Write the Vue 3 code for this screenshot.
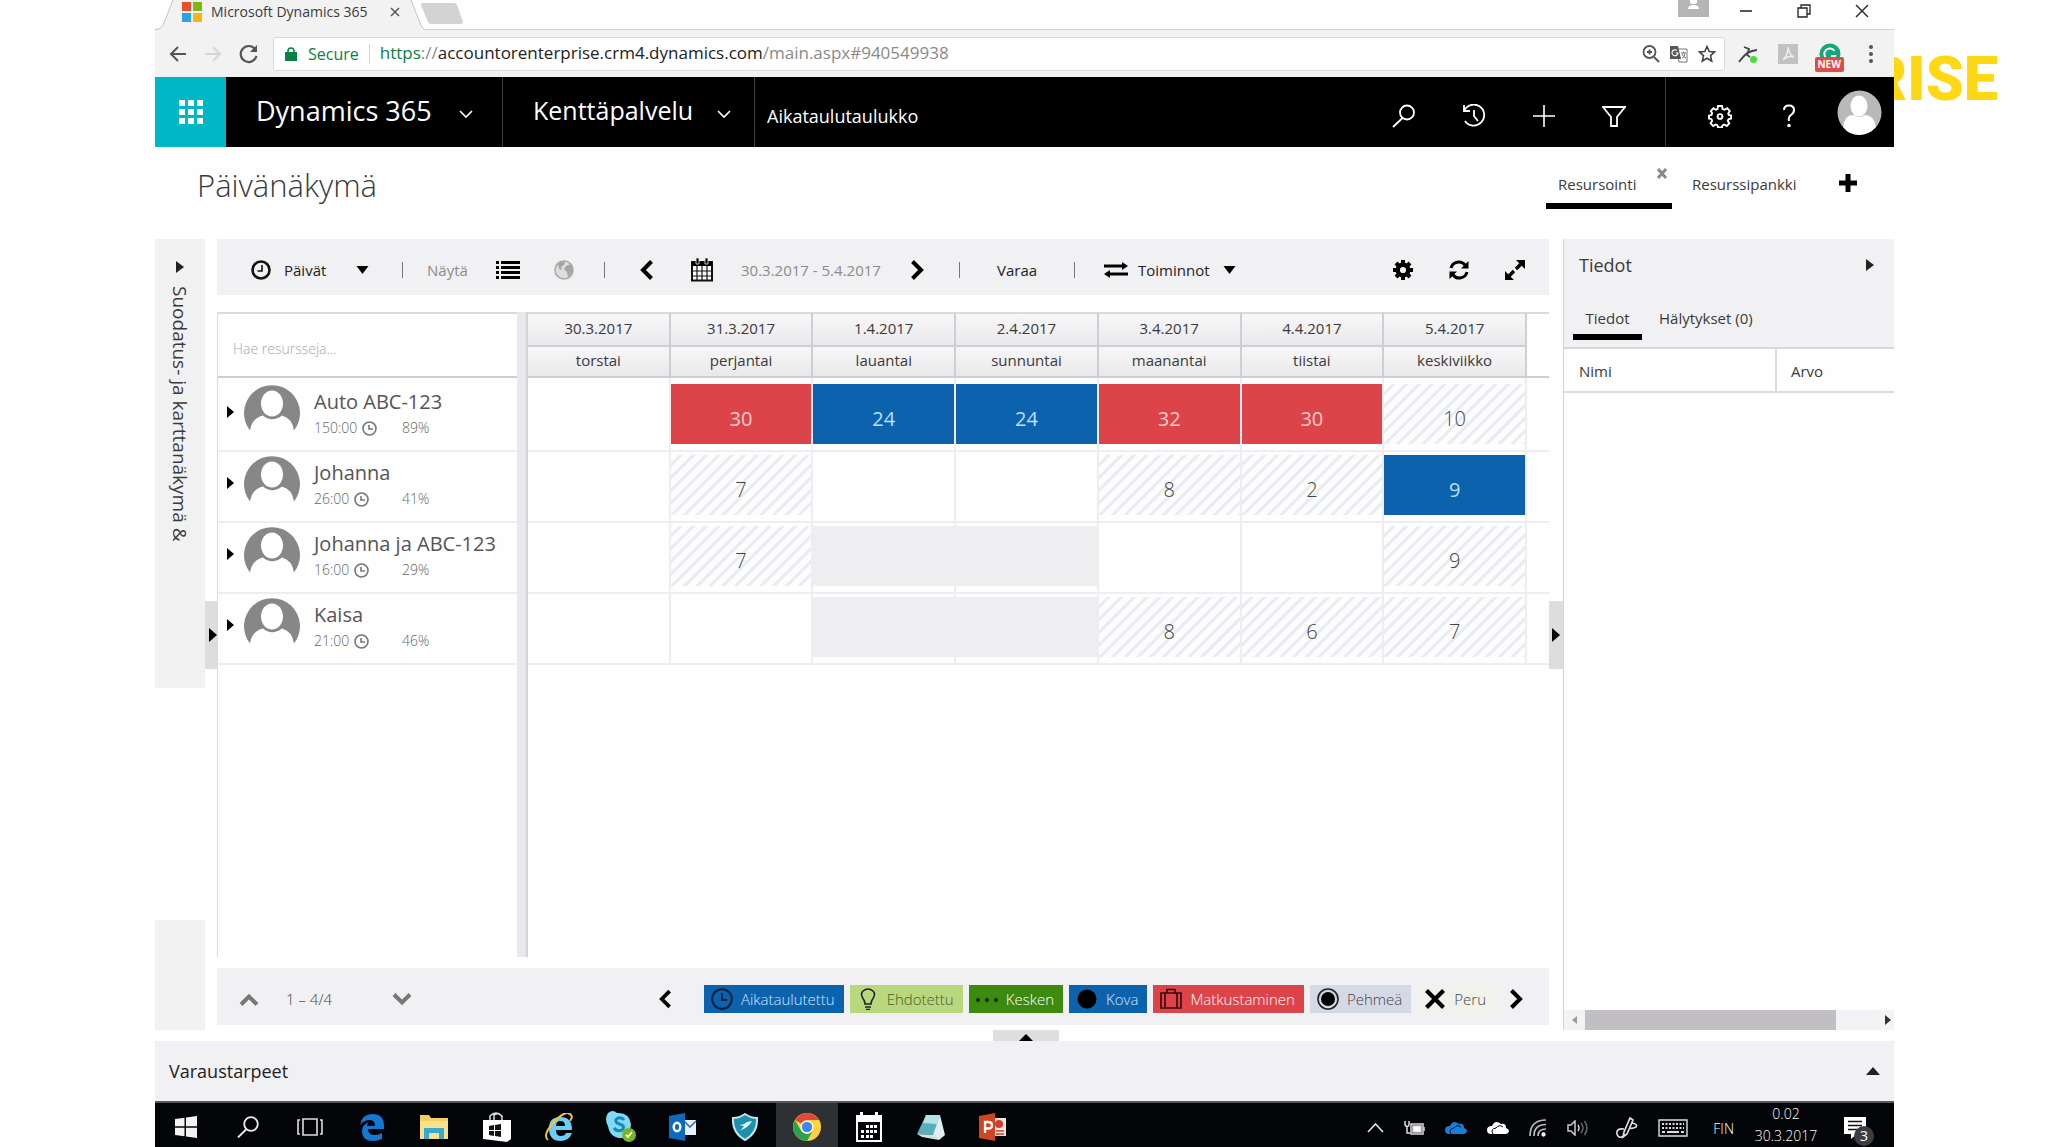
<script setup>
import { ref } from 'vue'

const search = ref('')

const days = [
  { date: '30.3.2017', name: 'torstai' },
  { date: '31.3.2017', name: 'perjantai' },
  { date: '1.4.2017', name: 'lauantai' },
  { date: '2.4.2017', name: 'sunnuntai' },
  { date: '3.4.2017', name: 'maanantai' },
  { date: '4.4.2017', name: 'tiistai' },
  { date: '5.4.2017', name: 'keskiviikko' }
]

const none = { kind: 'empty', value: '' }
const off = { kind: 'off', value: '' }
const hard = (value) => ({ kind: 'blue', value })
const over = (value) => ({ kind: 'red', value })
const open = (value) => ({ kind: 'hatch', value })

const resources = [
  { name: 'Auto ABC-123', hours: '150:00', load: '89%', cells: [none, over(30), hard(24), hard(24), over(32), over(30), open(10)] },
  { name: 'Johanna', hours: '26:00', load: '41%', cells: [none, open(7), none, none, open(8), open(2), hard(9)] },
  { name: 'Johanna ja ABC-123', hours: '16:00', load: '29%', cells: [none, open(7), off, off, none, none, open(9)] },
  { name: 'Kaisa', hours: '21:00', load: '46%', cells: [none, none, off, off, open(8), open(6), open(7)] }
]
</script>

<template>
  <div class="stage">
    <div class="brand">RISE</div>
    <div class="window">
      <header class="tabstrip">
        <div class="tab">
          <svg class="tab-shape" viewBox="0 0 270 30" preserveAspectRatio="none"><path d="M0 30 C6 29 7 27 9 23 L18 0 H256 L265 23 C267 27 268 29 270 30 Z" fill="#f2f2f2" /><path d="M0 29.500 C6 29 7 27 9 23 L18 0 M256 0 L265 23 C267 27 268 29 270 29.500" fill="none" stroke="#c4c4c4" /></svg>
          <svg class="ms" width="20" height="20" viewBox="0 0 20 20"><path fill="#e8502a" d="M0 0h9v9H0z" /><path fill="#7db51b" d="M11 0h9v9h-9z" /><path fill="#2aa3e6" d="M0 11h9v9H0z" /><path fill="#f9b50f" d="M11 11h9v9h-9z" /></svg>
          <span class="tab-title">Microsoft Dynamics 365</span>
          <button class="plain" aria-label="Close tab"><svg width="10" height="10" viewBox="0 0 10 10"><path d="M1 1l8 8M9 1l-8 8" stroke="#555" stroke-width="1.500" /></svg></button>
        </div>
        <svg class="newtab" width="42" height="21" viewBox="0 0 42 21"><path d="M2 0h31q2 0 3 2l6 17q0 2-2 2H10q-2 0-3-2L0 2q0-2 2-2z" fill="#d3d3d3" /></svg>
        <div class="win-buttons">
          <span class="user-tile"><svg width="31" height="17" viewBox="0 0 31 17"><path d="M0 0h31v17H0z" fill="#b5b5b5" /><path d="M12 0h7v2q0 2-3.500 2T12 2zM10 9q0-4 5.500-4T21 9z" fill="#fff" /></svg></span>
          <button class="plain" aria-label="Minimize"><svg width="14" height="14" viewBox="0 0 14 14"><path d="M1 7h12" stroke="#222" stroke-width="1.500" /></svg></button>
          <button class="plain" aria-label="Restore"><svg width="14" height="14" viewBox="0 0 14 14" fill="none" stroke="#222" stroke-width="1.300"><path d="M1 4h9v9H1zM4 4V1h9v9h-3" /></svg></button>
          <button class="plain" aria-label="Close"><svg width="14" height="14" viewBox="0 0 14 14"><path d="M1 1l12 12M13 1L1 13" stroke="#222" stroke-width="1.400" /></svg></button>
        </div>
      </header>

      <div class="addressbar">
        <button class="plain" aria-label="Back"><svg width="18" height="18" viewBox="0 0 18 18" fill="none" stroke="#555" stroke-width="2"><path d="M17 9H2M9 2L2 9l7 7" /></svg></button>
        <button class="plain" aria-label="Forward"><svg width="18" height="18" viewBox="0 0 18 18" fill="none" stroke="#d6d6d6" stroke-width="2"><path d="M1 9h15M9 2l7 7-7 7" /></svg></button>
        <button class="plain" aria-label="Reload"><svg width="20" height="20" viewBox="0 0 20 20" fill="none" stroke="#555" stroke-width="2.200"><path d="M16 5A8 8 0 1 0 17.500 12" /><path d="M18 1v7h-7z" fill="#555" stroke="none" /></svg></button>
        <div class="omnibox">
          <svg width="12" height="14" viewBox="0 0 12 14"><path d="M0 5h12v9H0z" fill="#0b8043" /><path d="M3 6V4a3 3 0 0 1 6 0v2" fill="none" stroke="#0b8043" stroke-width="1.600" /></svg>
          <span class="secure">Secure</span>
          <span class="url"><span class="scheme">https</span><span class="dim">://</span>accountorenterprise.crm4.dynamics.com<span class="dim">/main.aspx#940549938</span></span>
          <svg width="18" height="18" viewBox="0 0 18 18" fill="none" stroke="#555" stroke-width="1.800"><circle cx="7.500" cy="7" r="6" /><path d="M12 12l5 5M5 7h5M7.500 4.500v5" /></svg>
          <svg width="18" height="18" viewBox="0 0 18 18"><path d="M7 4h10v13H9z" fill="#fff" stroke="#777" /><path d="M0 1h8l3 13H0z" fill="#555" /><path d="M7 5.500A3 3 0 1 0 8 8H5.500" fill="none" stroke="#fff" stroke-width="1.200" /><path d="M11 8h5M13.500 6.500V8M12 13q3-1 3-5M12 9q1 3 4 4" fill="none" stroke="#777" /></svg>
          <svg width="18" height="18" viewBox="0 0 18 18"><path d="M9 1.500l2.200 5 5.300.5-4 3.600 1.200 5.400L9 13.200 4.300 16l1.200-5.400-4-3.600 5.300-.5z" fill="none" stroke="#444" stroke-width="1.600" /></svg>
        </div>
        <div class="extensions">
          <svg width="20" height="20" viewBox="0 0 20 20"><path d="M1 18q3-4 6-7 4-4 12-5M6 3l5 2-2 6 3 2" fill="none" stroke="#444" stroke-width="1.800" /><circle cx="15.500" cy="15.500" r="3.500" fill="#4bdc3c" /></svg>
          <svg width="20" height="20" viewBox="0 0 20 20"><path d="M0 0h20v20H0z" fill="#c2c2c2" /><path d="M5 16q5-5 5-13 1 8 6 10-6-2-11 3z" fill="none" stroke="#eee" stroke-width="1.500" /></svg>
          <span class="grammar"><svg width="22" height="22" viewBox="0 0 22 22"><circle cx="11" cy="11" r="10.500" fill="#15a67b" /><path d="M15.500 8A5.500 5.500 0 1 0 16 13h-4" fill="none" stroke="#fff" stroke-width="2" /></svg><span class="new">NEW</span></span>
          <svg width="4" height="18" viewBox="0 0 4 18" fill="#555"><circle cx="2" cy="2" r="2" /><circle cx="2" cy="9" r="2" /><circle cx="2" cy="16" r="2" /></svg>
        </div>
      </div>

      <nav class="crmnav">
        <button class="waffle" aria-label="Apps"><svg width="24" height="24" viewBox="0 0 24 24" fill="#fff"><path d="M0 0h6v6H0zM9 0h6v6H9zM18 0h6v6h-6zM0 9h6v6H0zM9 9h6v6H9zM18 9h6v6h-6zM0 18h6v6H0zM9 18h6v6H9zM18 18h6v6h-6z" /></svg></button>
        <button class="nav-main dyn">Dynamics 365<svg width="14" height="9" viewBox="0 0 14 9"><path d="M1 1l6 6 6-6" fill="none" stroke="#fff" stroke-width="1.600" /></svg></button>
        <button class="nav-main area">Kenttäpalvelu<svg width="14" height="9" viewBox="0 0 14 9"><path d="M1 1l6 6 6-6" fill="none" stroke="#fff" stroke-width="1.600" /></svg></button>
        <a href="#" class="nav-page">Aikataulutaulukko</a>
        <div class="nav-tools">
          <button class="plain" aria-label="Search"><svg width="24" height="24" viewBox="0 0 24 24" fill="none" stroke="#fff" stroke-width="1.800"><circle cx="15" cy="8.500" r="7" /><path d="M10.500 14L1 23" /></svg></button>
          <button class="plain" aria-label="Recent"><svg width="24" height="24" viewBox="0 0 24 24" fill="none" stroke="#fff" stroke-width="1.800"><path d="M2 7A10.500 10.500 0 1 1 3 17M2 1v6h6M12 6v6l4 5" /></svg></button>
          <button class="plain" aria-label="New"><svg width="24" height="24" viewBox="0 0 24 24" stroke="#fff" stroke-width="1.600"><path d="M12 1v22M1 12h22" /></svg></button>
          <button class="plain" aria-label="Filter"><svg width="24" height="24" viewBox="0 0 24 24" fill="none" stroke="#fff" stroke-width="1.800"><path d="M1 3h22l-8 10v9H9v-9z" /></svg></button>
        </div>
        <div class="nav-user">
          <button class="plain" aria-label="Settings"><svg width="24" height="24" viewBox="0 0 24 24" fill="none" stroke="#fff" stroke-width="1.900"><path d="M10 2h4l.6 3 2 .8 2.600-1.600 2.600 2.800-1.600 2.500.6 1.500 2.300.5v3l-2.600.8-.7 1.700 1.500 2.400-2.500 2.600-2.600-1.500-1.700.8-.5 2.200h-4l-.6-2.300-1.700-.7-2.500 1.500-2.600-2.600 1.500-2.500-.6-1.700-2.500-.6v-3l2.500-.7.7-1.700L2.800 7l2.600-2.700L7.800 5.800l1.700-.7z" /><circle cx="12" cy="12.500" r="2.400" /></svg></button>
          <button class="plain help" aria-label="Help"><svg width="14" height="24" viewBox="0 0 14 24" fill="none" stroke="#fff" stroke-width="2"><path d="M2 6q0-4.500 5-4.500t5 4.500q0 3-3 5t-2 6" /><circle cx="7" cy="21.500" r=".8" /></svg></button>
          <svg class="avatar" width="45" height="45" viewBox="0 0 45 45"><circle cx="22.500" cy="22.500" r="22" fill="#b9b9b9" /><ellipse cx="22" cy="16" rx="8.500" ry="10.500" fill="#fff" /><path d="M6 37q2-13 11-12 5 4 11 0 9 0 11 12-7 8-17 8T6 37z" fill="#fff" /></svg>
        </div>
      </nav>

      <div class="titlebar">
        <h1>Päivänäkymä</h1>
        <div class="views">
          <button class="view active">Resursointi</button>
          <button class="plain close-view" aria-label="Close view"><svg width="12" height="11" viewBox="0 0 12 11"><path d="M2 1l8 9M10 1L2 10" stroke="#8a8a8a" stroke-width="3" /></svg></button>
          <button class="view">Resurssipankki</button>
          <button class="plain add-view" aria-label="Add view"><svg width="18" height="18" viewBox="0 0 18 18"><path d="M9 0v18M0 9h18" stroke="#000" stroke-width="5" /></svg></button>
        </div>
      </div>

      <div class="work">
        <aside class="rail">
          <button class="rail-top">
            <svg width="8" height="12" viewBox="0 0 8 12"><path d="M0 0l8 6-8 6z" fill="#222" /></svg>
            <span>Suodatus- ja karttanäkymä &amp;</span>
          </button>
          <div class="rail-bottom"></div>
        </aside>
        <div class="gutter left"><button aria-label="Expand filter"><svg width="8" height="14" viewBox="0 0 8 14"><path d="M0 0l8 7-8 7z" /></svg></button></div>

        <main class="board">
          <div class="toolbar">
            <button class="tool days"><svg width="20" height="20" viewBox="0 0 20 20" fill="none" stroke="#111" stroke-width="2.600"><circle cx="10" cy="10" r="8.500" /><path d="M11 5v6H6.500" stroke-width="1.600" /></svg>Päivät<svg class="caret" width="13" height="8" viewBox="0 0 12 8"><path d="M0 0h12L6 8z" /></svg></button>
            <i class="sep"></i>
            <span class="muted show">Näytä</span>
            <button class="tool list" aria-label="List"><svg width="24" height="18" viewBox="0 0 24 18"><path d="M0 0h3v3H0zM5 0h19v3H5zM0 5h3v3H0zM5 5h19v3H5zM0 10h3v3H0zM5 10h19v3H5zM0 15h3v3H0zM5 15h19v3H5z" /></svg></button>
            <button class="tool globe" aria-label="Map"><svg width="20" height="20" viewBox="0 0 20 20"><circle cx="10" cy="10" r="9" fill="#dedede" stroke="#aaa" stroke-width="1.600" /><path d="M4 4q4-4 7-2l-1 3-3 2 1 3-3-1zM12 6l5-2q3 5 1 9l-4 4-1-5-3-3z" fill="#a6a6a6" /></svg></button>
            <i class="sep"></i>
            <button class="tool prev" aria-label="Previous"><svg width="13" height="20" viewBox="0 0 13 20"><path d="M11.500 1.500L3 10l8.500 8.500" fill="none" stroke="#000" stroke-width="4" /></svg></button>
            <button class="tool cal" aria-label="Calendar"><svg width="22" height="24" viewBox="0 0 22 24"><path d="M1 4h20v18.500H1z" fill="#fff" stroke="#111" stroke-width="2" /><path d="M1 4h20v4H1z" /><path d="M5 0h3v6H5zM14 0h3v6h-3z" stroke="#eee" stroke-width=".8" /><path d="M6 8v14M11 8v14M16 8v14M1 13h20M1 18h20" stroke="#111" stroke-width="1.200" /></svg></button>
            <span class="muted range">30.3.2017 - 5.4.2017</span>
            <button class="tool next" aria-label="Next"><svg width="13" height="20" viewBox="0 0 13 20"><path d="M1.500 1.500L10 10l-8.500 8.500" fill="none" stroke="#000" stroke-width="4" /></svg></button>
            <i class="sep"></i>
            <button class="tool book">Varaa</button>
            <i class="sep"></i>
            <button class="tool actions"><svg width="24" height="16" viewBox="0 0 24 16"><path d="M0 2.500h18V0l6 4-6 4V5.500H0zM24 10.500H6V8l-6 4 6 4v-2.500h18z" /></svg>Toiminnot<svg class="caret" width="13" height="8" viewBox="0 0 12 8"><path d="M0 0h12L6 8z" /></svg></button>
            <div class="tool-end">
              <button class="tool" aria-label="Settings"><svg width="20" height="20" viewBox="0 0 20 20"><circle cx="10" cy="10" r="5.300" fill="none" stroke="#000" stroke-width="4.400" /><path d="M10 0v4M10 16v4M0 10h4M16 10h4M3 3l3 3M14 14l3 3M17 3l-3 3M6 14l-3 3" stroke="#000" stroke-width="4" /></svg></button>
              <button class="tool" aria-label="Refresh"><svg width="20" height="20" viewBox="0 0 20 20"><path d="M2 8a8 8 0 0 1 14-3M18 12a8 8 0 0 1-14 3" fill="none" stroke="#000" stroke-width="3" /><path d="M19.500 1v7.500H12zM.5 19v-7.500H8z" /></svg></button>
              <button class="tool" aria-label="Full screen"><svg width="20" height="20" viewBox="0 0 20 20"><path d="M11 0h9v9zM0 11v9h9z" /><path d="M17 3l-6 6M9 11l-6 6" stroke="#000" stroke-width="3.400" /></svg></button>
            </div>
          </div>

          <div class="grid">
            <section class="resources">
              <div class="searchbox"><input v-model="search" type="text" aria-label="Hae resursseja" placeholder="Hae resursseja..." /></div>
              <div v-for="r in resources" :key="r.name" class="resource">
                <button class="plain" :aria-label="'Laajenna ' + r.name"><svg width="7" height="12" viewBox="0 0 7 12"><path d="M0 0l7 6-7 6z" /></svg></button>
                <svg class="person" width="56" height="48" viewBox="0 0 56 48"><path d="M6 47.500A28 28 0 1 1 50 47.500Q48 35 38 32.500Q28 40 19 32.500Q8 35 6 47.500z" fill="#888689" /><ellipse cx="28" cy="20.500" rx="11" ry="13" fill="#fff" /></svg>
                <div class="who">
                  <div class="name">{{ r.name }}</div>
                  <div class="meta">
                    <span class="hours">{{ r.hours }}<svg width="15" height="15" viewBox="0 0 15 15" fill="none" stroke="#777" stroke-width="1.600"><circle cx="7.500" cy="7.500" r="6.500" /><path d="M7 4v4h4" /></svg></span>
                    <span class="load">{{ r.load }}</span>
                  </div>
                </div>
              </div>
            </section>
            <div class="splitter"></div>
            <section class="schedule">
              <table>
                <colgroup><col v-for="d in days" :key="d.date" /><col class="tail" /></colgroup>
                <thead>
                  <tr class="dates"><th v-for="d in days" :key="d.date" scope="col">{{ d.date }}</th><td></td></tr>
                  <tr class="names"><th v-for="d in days" :key="d.date" scope="col">{{ d.name }}</th><td></td></tr>
                </thead>
                <tbody>
                  <tr v-for="r in resources" :key="r.name">
                    <td v-for="(c, i) in r.cells" :key="i"><div class="slot" :class="c.kind">{{ c.value }}</div></td>
                    <td class="blank"></td>
                  </tr>
                </tbody>
              </table>
            </section>
          </div>

          <div class="legendbar">
            <button class="tool page-up" aria-label="Up"><svg width="20" height="13" viewBox="0 0 20 13"><path d="M2 11.500L10 3.500l8 8" fill="none" stroke="#777" stroke-width="4" /></svg></button>
            <span class="pages">1 – 4/4</span>
            <button class="tool page-down" aria-label="Down"><svg width="20" height="13" viewBox="0 0 20 13"><path d="M2 1.500L10 9.500l8-8" fill="none" stroke="#777" stroke-width="4" /></svg></button>
            <div class="legend">
              <button class="tool" aria-label="Previous statuses"><svg width="12" height="20" viewBox="0 0 13 20"><path d="M11.500 1.500L3 10l8.500 8.500" fill="none" stroke="#000" stroke-width="4" /></svg></button>
              <ul>
                <li class="c-sched"><svg width="22" height="22" viewBox="0 0 22 22" fill="none" stroke="#06203d" stroke-width="2"><circle cx="11" cy="11" r="9.800" /><path d="M11 5v7h5" /></svg>Aikataulutettu</li>
                <li class="c-prop"><svg width="22" height="22" viewBox="0 0 22 22" fill="none" stroke="#222" stroke-width="1.600"><path d="M8 16q0-3-2-5.500Q3 6 6 3q5-4 10 0 3 3 0 7.500-2 2.500-2 5.500zM8 19h6M9 21.500h4" /></svg>Ehdotettu</li>
                <li class="c-prog"><svg width="22" height="22" viewBox="0 0 22 22" fill="#0c2303"><circle cx="2" cy="12" r="2" /><circle cx="11" cy="12" r="2" /><circle cx="20" cy="12" r="2" /></svg>Kesken</li>
                <li class="c-hard"><svg width="22" height="22" viewBox="0 0 22 22"><circle cx="11" cy="11" r="9.500" /></svg>Kova</li>
                <li class="c-travel"><svg width="22" height="22" viewBox="0 0 22 22" fill="none" stroke="#3a0d10" stroke-width="1.700"><path d="M1 5h20v15H1zM7 5V1.500h8V5M5 5v15M17 5v15" /></svg>Matkustaminen</li>
                <li class="c-soft"><svg width="22" height="22" viewBox="0 0 22 22"><circle cx="11" cy="11" r="10" fill="none" stroke="#222" stroke-width="1.600" /><circle cx="11" cy="11" r="7" /></svg>Pehmeä</li>
                <li class="c-cancel"><svg width="22" height="22" viewBox="0 0 22 22"><path d="M2.500 2.500l17 17M19.500 2.500l-17 17" stroke="#000" stroke-width="4.200" /></svg>Peru</li>
              </ul>
              <button class="tool" aria-label="Next statuses"><svg width="13" height="20" viewBox="0 0 13 20"><path d="M1.500 1.500L10 10l-8.500 8.500" fill="none" stroke="#000" stroke-width="4" /></svg></button>
            </div>
          </div>
        </main>

        <div class="gutter right"><button aria-label="Collapse details"><svg width="8" height="14" viewBox="0 0 8 14"><path d="M0 0l8 7-8 7z" /></svg></button></div>

        <aside class="details">
          <div class="details-head">
            <h2>Tiedot<button class="plain" aria-label="Piilota tiedot"><svg width="8" height="12" viewBox="0 0 8 12"><path d="M0 0l8 6-8 6z" fill="#222" /></svg></button></h2>
            <div class="details-tabs"><button class="active">Tiedot</button><button>Hälytykset (0)</button></div>
          </div>
          <table><thead><tr><th scope="col">Nimi</th><th scope="col">Arvo</th></tr></thead></table>
          <div class="scroll">
            <svg width="5" height="8" viewBox="0 0 5 8"><path d="M5 0v8L0 4z" fill="#999" /></svg>
            <span class="track"><span class="thumb"></span></span>
            <svg width="6" height="10" viewBox="0 0 6 10"><path d="M0 0v10l6-5z" fill="#333" /></svg>
          </div>
        </aside>
      </div>

      <div class="pull"><button aria-label="Expand requirements"><svg width="14" height="7" viewBox="0 0 14 7"><path d="M0 7l7-7 7 7z" /></svg></button></div>
      <section class="needs">
        <h2>Varaustarpeet</h2>
        <button class="plain" aria-label="Avaa"><svg width="14" height="8" viewBox="0 0 14 8"><path d="M0 8l7-8 7 8z" fill="#222" /></svg></button>
      </section>

      <footer class="taskbar">
        <div class="apps">
          <button aria-label="Start"><svg width="22" height="22" viewBox="0 0 22 22" fill="#f2f2f2"><path d="M0 3l9.500-1.300v8.600H0zM11 1.500L22 0v10.300H11zM0 11.700h9.500v8.600L0 19zM11 11.700h11V22l-11-1.500z" /></svg></button>
          <button aria-label="Search"><svg width="22" height="22" viewBox="0 0 22 22" fill="none" stroke="#eee" stroke-width="1.800"><circle cx="14" cy="8" r="6.800" /><path d="M9.500 13L1 21.500" /></svg></button>
          <button aria-label="Task view"><svg width="26" height="20" viewBox="0 0 26 20" fill="none" stroke="#ddd" stroke-width="1.600"><path d="M6 2h14v16H6zM3 3H1v14h2M23 3h2v14h-2" /></svg></button>
          <button aria-label="Edge"><svg width="26" height="28" viewBox="0 0 26 28"><path d="M1 12Q3 1 13.500 1 25 1 25 13v3H9q0 6 7 6 4 0 7-2v6q-4 2-9 2-11 0-11-10 0-6 7-9-2 2-2 4h8q0-6-5-6Q5 7 1 12z" fill="#1577d4" /></svg></button>
          <button aria-label="Explorer"><svg width="28" height="24" viewBox="0 0 28 24"><path d="M0 0h9l2 3h17v21H0z" fill="#f3cf62" /><path d="M0 6h28v18H0z" fill="#fbe08c" /><path d="M4 13h20v11h-5v-6H9v6H4z" fill="#3aa8cf" /></svg></button>
          <button aria-label="Store"><svg width="28" height="30" viewBox="0 0 28 30"><path d="M7 9V4q6-6 12 0v5M11 8V3q6-3 8 2" fill="none" stroke="#ddd" stroke-width="1.500" /><path d="M0 8h28v19l-4 3-24-3z" fill="#fff" /><path d="M6 14l5-1v5H6zM12 13l6-1v6h-6zM6 19h5v5l-5-1zM12 19h6v6l-6-1z" fill="#111" /></svg></button>
          <button aria-label="Internet Explorer"><svg width="30" height="28" viewBox="0 0 30 28"><path fill-rule="evenodd" d="M5 15Q5 4 16.500 4 28 4 28 17H12q0 6 5 6 4 0 5-3h6q-3 8-11.500 8Q5 28 5 15zm7-2h9q0-5-4.500-5T12 13z" fill="#6ccdf5" /><path d="M4 27Q-2 22 10 9T27 2q2 2-1 6" fill="none" stroke="#f0c33a" stroke-width="2" /></svg></button>
          <button aria-label="Skype"><svg width="30" height="32" viewBox="0 0 30 32"><path d="M2 2Q7-2 11 2q12-1 14 11 0 3-1 5 3 4-2 9-3 1-5 0Q4 28 2 15-2 8 2 2z" fill="#7fdaf8" /><path d="M18 9q-2-3-6-2-4 2-1 5l5 2q3 2 0 5-5 2-8-2" fill="none" stroke="#1787b5" stroke-width="3" /><circle cx="23" cy="24" r="7" fill="#7ab51d" /><path d="M20 24l2 2 4-5" fill="none" stroke="#fff" stroke-width="1.800" /></svg></button>
          <button aria-label="Outlook"><svg width="28" height="28" viewBox="0 0 28 28"><path d="M14 7h13v15H14z" fill="#e8f1fa" /><path d="M15 8l6 6 6-6" fill="none" stroke="#3b6fa8" stroke-width="1.600" /><path d="M0 3l16-3v28L0 25z" fill="#0c69bd" /><ellipse cx="8" cy="14" rx="3.300" ry="4.200" fill="none" stroke="#fff" stroke-width="2.400" /></svg></button>
          <button aria-label="Shield"><svg width="28" height="28" viewBox="0 0 28 28"><path d="M14 1q6 4 12 4 1 15-12 22Q1 20 2 5q6 0 12-4z" fill="#1c91ac" stroke="#c5e6e8" stroke-width="2" /><path d="M7 18q4-1 6-5l-5-1q5 0 8-3l5-1-2 3q-4 5-12 7z" fill="#e8fbff" /></svg></button>
          <button class="on" aria-label="Chrome"><svg width="30" height="30" viewBox="0 0 30 30"><circle cx="15" cy="15" r="14" fill="#ffd23f" /><path d="M2.900 8A14 14 0 0 1 27.100 8H15a7 7 0 0 0-6 3.500z" fill="#e2483a" /><path d="M2.900 8A14 14 0 0 0 15 29l6-10.500a7 7 0 0 1-12 0z" fill="#2da14e" /><path d="M27.100 8H15v14l6-3.500q2-4 0-7z" fill="#ffd23f" /><circle cx="15" cy="15" r="6.500" fill="#fff" /><circle cx="15" cy="15" r="5.200" fill="#4285f4" /></svg></button>
          <button aria-label="Calendar"><svg width="26" height="30" viewBox="0 0 26 30"><path d="M1 4h24v25H1z" fill="none" stroke="#fff" stroke-width="2" /><path d="M1 4h24v6H1zM4 0h3v6H4zM19 0h3v6h-3z" fill="#fff" /><path d="M10 13h3v3h-3zM14 13h3v3h-3zM18 13h3v3h-3zM5 18h3v3H5zM10 18h3v3h-3zM14 18h3v3h-3zM18 18h3v3h-3zM5 23h3v3H5zM10 23h3v3h-3zM14 23h3v3h-3z" fill="#fff" /></svg></button>
          <button aria-label="Notepad"><svg width="28" height="28" viewBox="0 0 28 28"><path d="M9 2h14l-5 20L0 21z" fill="#58aebb" /><path d="M23 2l5 20-6 5-6-5z" fill="#dfeff0" /><path d="M9 2h14l-3 9-14-1z" fill="#b5e2e6" /><path d="M0 21l18 1 4 5-17-3z" fill="#cfe3e4" /></svg></button>
          <button aria-label="PowerPoint"><svg width="28" height="28" viewBox="0 0 28 28"><path d="M14 5h13v18H14z" fill="#f9e3dd" /><circle cx="20" cy="11" r="4" fill="#cf3f2c" /><path d="M17 18h8M17 21h8" stroke="#cf3f2c" stroke-width="1.300" /><path d="M0 3l16-3v28L0 25z" fill="#d04423" /><path d="M6 20V9h3q4 0 4 3.300T9 15.500H6" fill="none" stroke="#fff" stroke-width="2.300" /></svg></button>
        </div>
        <div class="tray">
          <svg width="17" height="10" viewBox="0 0 17 10"><path d="M1 9l7.500-8L16 9" fill="none" stroke="#ddd" stroke-width="1.700" /></svg>
          <svg width="21" height="16" viewBox="0 0 21 16" fill="none" stroke="#ddd" stroke-width="1.500"><path d="M7 4h12v10H7z" /><path d="M9 6h8v6H9z" fill="#fff" /><path d="M1 1v4q2 3 4 0V1M3 6v7h3M20 7v4" /></svg>
          <svg width="22" height="14" viewBox="0 0 22 14"><path d="M4 13q-4 0-4-4t5-4Q8-2 14 3q5-1 5 4 3 1 3 3t-3 3z" fill="#1280dc" /><path d="M6 13q-3-5 3-6 3-4 7-1" fill="none" stroke="#02060b" /></svg>
          <svg width="22" height="14" viewBox="0 0 22 14"><path d="M4 13q-4 0-4-4t5-4Q8-2 14 3q5-1 5 4 3 1 3 3t-3 3z" fill="#fff" /><path d="M6 13q-3-5 3-6 3-4 7-1" fill="none" stroke="#02060b" /></svg>
          <svg width="18" height="18" viewBox="0 0 18 18" fill="none" stroke="#bbb" stroke-width="1.700"><path d="M1 17Q1 1 17 1M5 17Q5 5.500 17 5.500M9 17q0-7 8-7" /><circle cx="14.500" cy="15.500" r="1.300" fill="#fff" stroke="#fff" /></svg>
          <svg width="22" height="16" viewBox="0 0 22 16" fill="none" stroke="#ccc" stroke-width="1.500"><path d="M1 5h3l4-4v14l-4-4H1zM11 5q2 3 0 6" /><path d="M14 3q4 5 0 10M17.500 1q5 7 0 14" stroke="#666" /></svg>
          <svg class="pen" width="22" height="22" viewBox="0 0 22 22" fill="none" stroke="#ddd" stroke-width="1.700"><path d="M14 1l3 2-6 14-4 3 1-5zM8 12q-8-1-7 5 2 6 8 1M16 6q6 1 4 4-4 2-6 1" /></svg>
          <svg width="30" height="18" viewBox="0 0 30 18" fill="none" stroke="#ddd" stroke-width="1.400"><path d="M1 1h28v16H1z" /><path d="M4 5h22M4 9h22" stroke-dasharray="2 1.500" stroke-width="2" /><path d="M4 13h3M9 13h12M23 13h3" stroke-width="1.800" /></svg>
          <span class="lang">FIN</span>
          <time><span>0.02</span><span>30.3.2017</span></time>
          <span class="notice"><svg width="22" height="22" viewBox="0 0 22 22"><path d="M0 0h22v17h-9l-6 5v-5H0z" fill="#fff" /><path d="M4 4.500h14M4 8.500h14M4 12.500h9" stroke="#111" stroke-width="1.500" /></svg><b>3</b></span>
        </div>
      </footer>
    </div>
  </div>
</template>

<style>
body { margin: 0; background: #fefefe; }
</style>

<style scoped>
* { box-sizing: border-box; }
.stage { position: relative; padding: 0 154px 0 155px; font-family: "Open Sans", "Noto Sans", sans-serif; font-size: 15px; color: #3a3a3a; overflow: hidden; }
.brand { position: absolute; top: 43px; right: 50px; font: 900 61px/72px Roboto, sans-serif; color: #fed815; }
.window { position: relative; min-height: 100vh; display: flex; flex-direction: column; background: #fefefe; }
button { font: inherit; color: inherit; border: 0; background: none; padding: 0; margin: 0; }
svg { display: block; flex: none; }
.plain { display: flex; }
h1, h2, ul { margin: 0; padding: 0; font-weight: 400; }

.tabstrip { height: 30px; display: flex; align-items: flex-start; border-bottom: 1px solid #d0d0d0; }
.tab { position: relative; width: 270px; height: 30px; padding: 2px 0 8px 27px; display: flex; align-items: center; }
.tab-shape { position: absolute; left: 0; top: 0; width: 100%; height: 100%; }
.ms, .tab-title, .tab .plain { position: relative; }
.tab-title { margin: 0 17px 0 9px; font-size: 14px; line-height: 20px; width: 162px; white-space: nowrap; }
.newtab { margin: 3px 0 0 -4px; }
.win-buttons { margin-left: auto; display: flex; gap: 44px; padding-right: 25px; }
.win-buttons .plain { padding-top: 4px; }
.win-buttons .user-tile { margin-right: -14px; }

.addressbar { height: 47px; background: #f2f2f2; display: flex; align-items: center; padding-left: 14px; }
.addressbar > .plain { margin-right: 17px; }
.addressbar > .plain + .plain + .plain { margin-right: 14px; }
.omnibox { flex: 1; height: 34px; background: #fff; border: 1px solid #d8d8d8; border-radius: 3px; display: flex; align-items: center; gap: 10px; padding: 0 8px 0 11px; font-size: 16px; }
.secure { color: #0b8043; padding-right: 10px; margin-left: 1px; line-height: 20px; border-right: 1px solid #d5d5d5; }
.url { flex: 1; color: #222; font-size: 17px; line-height: 24px; padding-bottom: 2px; }
.scheme { color: #0b8043; }
.dim { color: #8a8a8a; }
.extensions { display: flex; align-items: center; width: 169px; padding: 0 21px 0 13px; justify-content: space-between; }
.grammar { position: relative; margin-right: 8px; }
.new { position: absolute; left: -4px; top: 14px; width: 29px; background: #df4b45; color: #fff; font-size: 10px; line-height: 15px; font-weight: 700; text-align: center; border-radius: 2px; }

.crmnav { height: 70px; background: #000; display: flex; color: #fff; }
.waffle { width: 71px; background: #00b7c6; display: flex; align-items: center; justify-content: center; }
.nav-main { display: flex; align-items: center; padding: 0 29px 4px 30px; justify-content: space-between; border-right: 1px solid #3f3f3f; }
.nav-main svg { margin-top: 8px; }
.dyn { width: 277px; font-size: 27px; }
.area { width: 252px; font-size: 25px; padding-right: 23px; }
.nav-page { color: #fff; text-decoration: none; font-size: 18px; padding: 27px 0 0 12px; line-height: 24px; }
.nav-tools { margin-left: auto; width: 308px; display: flex; align-items: center; justify-content: space-between; padding: 8px 39px 0 34px; border-right: 1px solid #3f3f3f; }
.nav-user { width: 228px; display: flex; align-items: center; justify-content: space-between; padding: 8px 12px 0 42px; }
.nav-user .help { margin-left: 8px; }
.nav-user .avatar { margin-top: -8px; }

.titlebar { height: 92px; display: flex; justify-content: space-between; }
h1 { padding: 18px 0 0 42px; font-size: 31px; line-height: 40px; font-weight: 300; }
.views { display: flex; align-items: flex-start; padding: 22px 37px 0 0; }
.view { height: 40px; font-size: 15px; text-align: left; }
.view.active { width: 126px; padding: 0 0 4px 12px; border-bottom: 6px solid #000; }
.close-view { margin: -1px 13px 0 -16px; }
.view:not(.active) { width: 129px; padding: 0 0 10px 11px; }
.add-view { margin: 5px 0 0 29px; }

.work { flex: 1; min-height: 791px; display: flex; }
.rail { width: 50px; display: flex; flex-direction: column; justify-content: space-between; }
.rail-top { height: 449px; background: #f2f1f2; display: flex; flex-direction: column; align-items: center; gap: 13px; padding-top: 22px; }
.rail-top span { writing-mode: vertical-rl; font-size: 19px; line-height: 24px; white-space: nowrap; }
.rail-bottom { height: 110px; background: #f2f1f2; }
.gutter { width: 12px; display: flex; align-items: center; }
.gutter.right { width: 14px; }
.gutter button { width: 100%; height: 68px; background: #dedcdf; display: flex; align-items: center; justify-content: flex-end; }
.gutter.right button { justify-content: center; }

.board { flex: 1; min-width: 0; display: flex; flex-direction: column; padding-bottom: 5px; }
.toolbar { height: 56px; background: #f1f0f2; display: flex; align-items: center; padding: 6px 0 0 34px; }
.tool { display: flex; align-items: center; color: #222; }
.sep { width: 1px; height: 16px; background: #777; }
.muted { color: #8c8c8c; }
.days { width: 151px; gap: 13px; }
.days .caret { margin-left: 17px; }
.show { width: 69px; margin-left: 24px; }
.list { width: 58px; }
.globe { width: 50px; }
.prev { margin-left: 35px; width: 51px; }
.cal { width: 50px; }
.range { width: 170px; }
.next { width: 48px; }
.book { width: 114px; padding-left: 37px; }
.actions { margin-left: 29px; gap: 10px; }
.actions .caret { margin-left: 3px; }
.tool-end { margin-left: auto; display: flex; gap: 36px; padding-right: 24px; }

.grid { flex: 1; margin: 17px 0 11px; display: flex; }
.resources { width: 300px; border: solid #dcdade; border-width: 2px 0 0 1px; }
.searchbox { height: 64px; border-bottom: 2px solid #d0ced2; display: flex; }
.searchbox input { width: 100%; border: 0; outline: 0; background: none; padding: 8px 0 0 15px; font: 300 14px/20px "Open Sans", sans-serif; color: #333; }
.searchbox input::placeholder { color: #a8a8a8; opacity: 1; }
.resource { height: 71px; border-bottom: 2px solid #efedf1; display: flex; padding: 2px 0 0 9px; }
.searchbox + .resource { height: 74px; padding-top: 5px; }
.resource .plain { padding-top: 23px; }
.person { margin-left: 10px; }
.who { padding-left: 14px; white-space: nowrap; }
.name { font-size: 20px; line-height: 26px; padding-top: 6px; color: #555; }
.meta { display: flex; line-height: 20px; padding-top: 3px; font-size: 14px; font-weight: 300; color: #666; }
.hours { display: flex; align-items: center; gap: 5px; width: 88px; }
.splitter { width: 11px; background: #eae8ec; border-right: 2px solid #d5d3d8; }
.schedule { flex: 1; min-width: 0; }
table { width: 100%; table-layout: fixed; border-collapse: separate; border-spacing: 0; }
.tail { width: 22px; }
.schedule th, .schedule td { padding: 0; font-weight: 400; text-align: center; }
.schedule th { padding-bottom: 3px; border-right: 2px solid #d0ced2; background: linear-gradient(#f8f7f8, #e9e8eb); color: #3a3a3a; font-size: 15px; line-height: 20px; }
.dates > * { height: 33px; border-top: 2px solid #dcdade; }
.names > * { height: 33px; border-bottom: 2px solid #cfcdd1; }
.names th { border-top: 2px solid #d0ced2; }
.schedule tbody td { height: 71px; padding: 3px 0 6px; border-bottom: 2px solid #efedf1; border-right: 2px solid #efedf1; vertical-align: top; }
.schedule tbody tr:first-child td { height: 74px; padding-top: 6px; }
.schedule tbody td.blank { border-right: 0; }
.slot { height: 60px; display: flex; align-items: center; justify-content: center; padding-top: 8px; font-size: 20px; font-weight: 300; color: #444; }
.blue { background: #0d62ad; color: #b9e0ff; font-weight: 400; }
.red { background: #dc444a; color: #ffd0cc; font-weight: 400; }
.off { background: #eeedef; margin-right: -2px; }
.hatch { background: repeating-linear-gradient(135deg, #fdfdfe 0 5px, #e8ebf0 6px 8px, #fdfdfe 9px); }

.legendbar { height: 57px; background: #f1f0f2; display: flex; align-items: center; padding: 5px 0 0 22px; }
.page-up { width: 47px; }
.pages { width: 106px; font-weight: 300; color: #444; }
.legend { flex: 1; display: flex; justify-content: flex-end; align-items: center; padding-right: 26px; gap: 15px; }
.legend ul { display: flex; gap: 6px; list-style: none; padding-left: 18px; }
.legend li { height: 28px; display: flex; align-items: center; gap: 8px; padding: 0 9px 0 7px; font-size: 15px; font-weight: 300; white-space: nowrap; color: #fff; }
.c-sched, .c-hard { background: #0d62ad; }
.legend .c-sched, .legend .c-hard { color: #cfe8ff; }
.c-prop { background: #b9d77c; }
.legend .c-prop { color: #4c5b2b; }
.c-prog { background: #3c8a0e; }
.c-travel { background: #dc444a; }
.c-soft { background: #d5d9e6; }
.legend .c-soft { color: #444; }
.c-cancel { background: #f1f3ea; }
.legend .c-cancel { color: #444; }

.details { width: 331px; display: flex; flex-direction: column; border-left: 1px solid #d4d2d6; }
.details-head { height: 110px; background: #f1f0f2; border-bottom: 2px solid #d8d6da; }
.details-head h2 { display: flex; justify-content: space-between; align-items: center; height: 52px; padding: 0 20px 0 15px; font-size: 18px; }
.details-tabs { display: flex; margin-left: 9px; gap: 17px; padding-top: 10px; }
.details-tabs button { height: 39px; padding: 0 0 6px; line-height: 26px; font-size: 15px; }
.details-tabs .active { width: 69px; border-bottom: 6px solid #000; padding-bottom: 0; }
.details th { text-align: left; font-weight: 400; height: 44px; padding: 1px 0 0 15px; border-bottom: 2px solid #dddbe0; font-size: 15px; }
.details th:first-child { width: 213px; border-right: 2px solid #dddbe0; }
.details th + th { padding-left: 14px; }
.scroll { margin-top: auto; height: 20px; background: #f3f2f4; display: flex; align-items: center; padding: 0 3px 0 8px; gap: 8px; }
.track { flex: 1; height: 100%; margin-right: 41px; }
.thumb { display: block; height: 100%; background: #c1bfc2; }

.pull { height: 11px; padding-left: 838px; }
.pull button { width: 66px; height: 11px; background: #dfdfe0; display: flex; justify-content: center; align-items: flex-end; }
.needs { height: 60px; background: #f1f0f2; display: flex; align-items: center; justify-content: space-between; padding: 0 14px; }
.needs h2 { font-size: 18px; color: #222; }

.taskbar { height: 46px; background: #020408; border-top: 2px solid #55575a; display: flex; justify-content: space-between; color: #fff; }
.apps { width: 50%; display: flex; }
.apps button { flex: 1; display: flex; align-items: center; justify-content: center; padding-top: 4px; }
.apps .on { background: #2e3134; }
.tray { display: flex; align-items: center; padding: 6px 17px 0 0; gap: 20px; font-size: 14px; font-weight: 300; }
.tray time { display: flex; flex-direction: column; align-items: center; width: 66px; margin: -6px 5px 0 -1px; }
.tray time span { line-height: 22px; }
.tray .pen { margin-left: 7px; }
.tray .lang { margin-left: 5px; }
.notice { position: relative; width: 33px; }
.notice b { position: absolute; left: 10px; top: 9px; width: 20px; height: 20px; border-radius: 50%; background: #3c3e41; font: 400 14px/20px "Open Sans", sans-serif; text-align: center; }
</style>
